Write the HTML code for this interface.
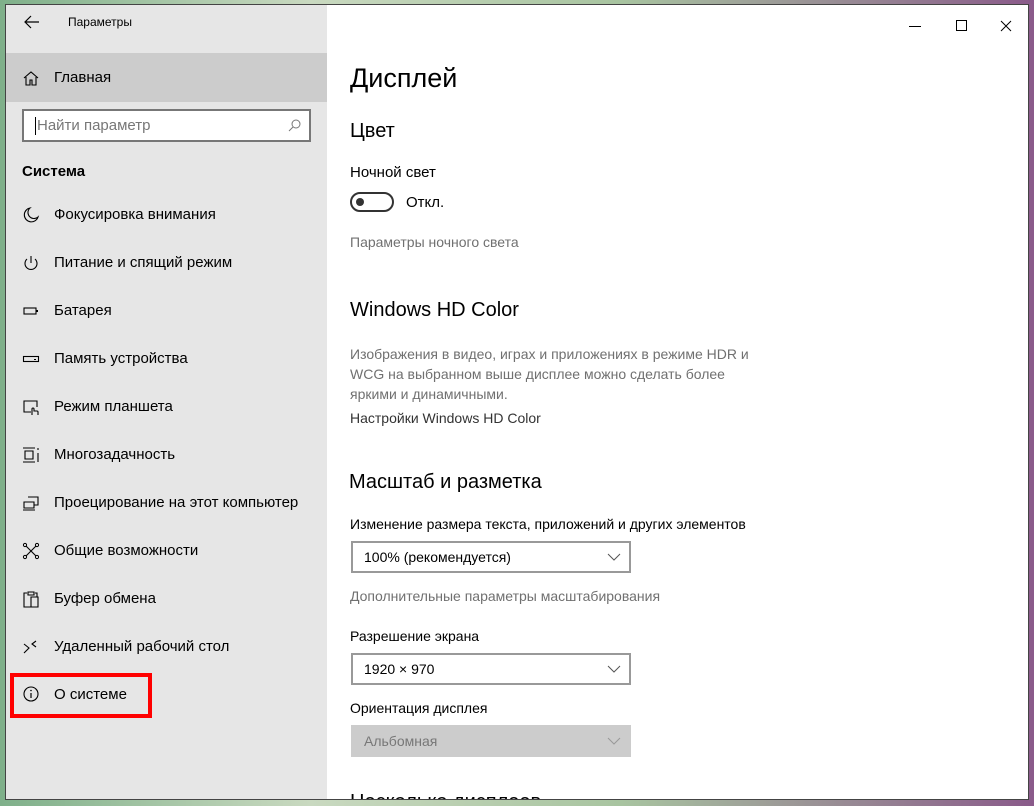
<!DOCTYPE html>
<html><head><meta charset="utf-8"><style>
*{margin:0;padding:0;box-sizing:border-box}
body{width:1034px;height:806px;overflow:hidden;background:linear-gradient(90deg,#7fb08a,#c9d9c0 30%,#a8c4a0 60%,#8a5a8a);font-family:"Liberation Sans",sans-serif;position:relative;color:#000}
.win{position:absolute;left:5px;top:4px;width:1024px;height:796px;border:1px solid #444;background:#fff;overflow:hidden}
.side{position:absolute;left:0;top:0;width:321px;height:100%;background:#e6e6e6}
.t{position:absolute;font-size:15px;white-space:nowrap}
.ic{position:absolute;left:16px;width:18px;height:18px}
.gray{color:#707070}
.sel{position:absolute;left:345px;width:280px;height:32px;border:2px solid #999;background:#fff}
.chev{position:absolute;right:8px;top:6px}
</style></head><body>
<div class="win">
<div class="side">
 <svg style="position:absolute;left:18px;top:10px" width="16" height="14" viewBox="0 0 16 14"><path d="M15 7H2M7 1L1 7l6 6" fill="none" stroke="#000" stroke-width="1.2"/></svg>
 <div class="t" style="left:62px;top:10px;font-size:12px">Параметры</div>
 <div style="position:absolute;left:0;top:48px;width:321px;height:49px;background:#cccccc"></div>
 <svg class="ic" style="top:64px" viewBox="0 0 18 18"><path d="M2 9L9 3l7 6M4 8v8h4v-5h2v5h4V8" fill="none" stroke="#000" stroke-width="1.1"/></svg>
 <div class="t" style="left:48px;top:64px">Главная</div>
 <div style="position:absolute;left:16px;top:104px;width:289px;height:33px;border:2px solid #777;background:#fff">
  <div style="position:absolute;left:11px;top:6px;width:1px;height:18px;background:#000"></div>
  <div class="t gray" style="left:13px;top:6px;font-size:15px;color:#777">Найти параметр</div>
  <svg style="position:absolute;right:8px;top:8px" width="13" height="13" viewBox="0 0 13 13"><circle cx="8" cy="5" r="4" fill="none" stroke="#777"/><path d="M5 8L1 12" stroke="#777"/></svg>
 </div>
 <div class="t" style="left:16px;top:158px;font-weight:bold;font-size:15px">Система</div>

 <svg class="ic" style="top:201px" viewBox="0 0 18 18"><path d="M8 2a7 7 0 1 0 8 9A6 6 0 0 1 8 2z" fill="none" stroke="#000" stroke-width="1.1"/></svg>
 <div class="t" style="left:48px;top:201px">Фокусировка внимания</div>
 <svg class="ic" style="top:249px" viewBox="0 0 18 18"><path d="M5 5a6 6 0 1 0 8 0M9 2v7" fill="none" stroke="#000" stroke-width="1.1"/></svg>
 <div class="t" style="left:48px;top:249px">Питание и спящий режим</div>
 <svg class="ic" style="top:297px" viewBox="0 0 18 18"><rect x="2" y="6" width="12" height="6" fill="none" stroke="#000" stroke-width="1.1"/><rect x="14" y="8" width="2" height="2"/></svg>
 <div class="t" style="left:48px;top:297px">Батарея</div>
 <svg class="ic" style="top:345px" viewBox="0 0 18 18"><rect x="1.5" y="6.5" width="15" height="5" fill="none" stroke="#000" stroke-width="1.1"/><rect x="12" y="9" width="2" height="1"/></svg>
 <div class="t" style="left:48px;top:345px">Память устройства</div>
 <svg class="ic" style="top:393px" viewBox="0 0 18 18"><path d="M9 14H2V3h13v6M10 17v-6a1 1 0 0 1 2 0v2h3a1 1 0 0 1 1 1v3" fill="none" stroke="#000" stroke-width="1.1"/></svg>
 <div class="t" style="left:48px;top:393px">Режим планшета</div>
 <svg class="ic" style="top:441px" viewBox="0 0 18 18"><path d="M1 2h12M1 16h12M3 5h8v8H3zM16 2v2M16 7v9" fill="none" stroke="#000" stroke-width="1.1"/></svg>
 <div class="t" style="left:48px;top:441px">Многозадачность</div>
 <svg class="ic" style="top:489px" viewBox="0 0 18 18"><path d="M6 3h10v8h-4M2 8h10v6H2zM1 16h12" fill="none" stroke="#000" stroke-width="1.1"/></svg>
 <div class="t" style="left:48px;top:489px">Проецирование на этот компьютер</div>
 <svg class="ic" style="top:537px" viewBox="0 0 18 18"><path d="M4 4l10 10M14 4L4 14" stroke="#000" stroke-width="1.1"/><circle cx="3" cy="3" r="1.6" fill="#e6e6e6" stroke="#000"/><circle cx="15" cy="3" r="1.6" fill="#e6e6e6" stroke="#000"/><circle cx="3" cy="15" r="1.6" fill="#e6e6e6" stroke="#000"/><circle cx="15" cy="15" r="1.6" fill="#e6e6e6" stroke="#000"/></svg>
 <div class="t" style="left:48px;top:537px">Общие возможности</div>
 <svg class="ic" style="top:585px" viewBox="0 0 18 18"><path d="M5 3H2v14h7M6 2h6v3H6zM13 3h2v4M9 7h7v10H9z" fill="none" stroke="#000" stroke-width="1.1"/></svg>
 <div class="t" style="left:48px;top:585px">Буфер обмена</div>
 <svg class="ic" style="top:633px" viewBox="0 0 18 18"><path d="M2 6l5 4-5 5M14 3l-4 3 4 3" fill="none" stroke="#000" stroke-width="1.1"/></svg>
 <div class="t" style="left:48px;top:633px">Удаленный рабочий стол</div>
 <svg class="ic" style="top:680px" viewBox="0 0 18 18"><circle cx="9" cy="9" r="7" fill="none" stroke="#000" stroke-width="1.1"/><path d="M9 8v5" stroke="#000" stroke-width="1.2"/><circle cx="9" cy="5.5" r=".8"/></svg>
 <div class="t" style="left:48px;top:681px">О системе</div>
 <div style="position:absolute;left:4px;top:668px;width:142px;height:45px;border:4px solid #f00"></div>
</div>

<svg style="position:absolute;left:903px;top:21px" width="12" height="1"><rect width="12" height="1"/></svg>
<svg style="position:absolute;left:950px;top:15px" width="11" height="11"><rect x=".5" y=".5" width="10" height="10" fill="none" stroke="#000"/></svg>
<svg style="position:absolute;left:994px;top:15px" width="12" height="12"><path d="M1 1l10 10M11 1L1 11" stroke="#000"/></svg>

<div class="t" style="left:344px;top:58px;font-size:27px">Дисплей</div>
<div class="t" style="left:344px;top:115px;font-size:20px">Цвет</div>
<div class="t" style="left:344px;top:159px">Ночной свет</div>
<div style="position:absolute;left:344px;top:187px;width:44px;height:20px;border:2px solid #333;border-radius:10px"><div style="position:absolute;left:4px;top:4px;width:8px;height:8px;border-radius:50%;background:#333"></div></div>
<div class="t" style="left:400px;top:189px">Откл.</div>
<div class="t gray" style="left:344px;top:229px;font-size:14px">Параметры ночного света</div>
<div class="t" style="left:344px;top:294px;font-size:20px">Windows HD Color</div>
<div class="t gray" style="left:344px;top:339px;font-size:14px;line-height:20px;white-space:normal;width:425px">Изображения в видео, играх и приложениях в режиме HDR и WCG на выбранном выше дисплее можно сделать более яркими и динамичными.</div>
<div class="t" style="left:344px;top:405px;font-size:14px;color:#333">Настройки Windows HD Color</div>
<div class="t" style="left:343px;top:466px;font-size:20px">Масштаб и разметка</div>
<div class="t" style="left:344px;top:511px;font-size:14px">Изменение размера текста, приложений и других элементов</div>
<div class="sel" style="top:536px"><div class="t" style="left:11px;top:6px;font-size:14px">100% (рекомендуется)</div><svg class="chev" width="14" height="14" style="top:8px"><path d="M1 3l6 6 6-6" fill="none" stroke="#555"/></svg></div>
<div class="t gray" style="left:344px;top:583px;font-size:14px">Дополнительные параметры масштабирования</div>
<div class="t" style="left:344px;top:623px;font-size:14px">Разрешение экрана</div>
<div class="sel" style="top:648px"><div class="t" style="left:11px;top:6px;font-size:14px">1920 × 970</div><svg class="chev" width="14" height="14" style="top:8px"><path d="M1 3l6 6 6-6" fill="none" stroke="#555"/></svg></div>
<div class="t" style="left:344px;top:695px;font-size:14px">Ориентация дисплея</div>
<div class="sel" style="top:720px;border:none;background:#ccc"><div class="t" style="left:13px;top:8px;font-size:14px;color:#777">Альбомная</div><svg class="chev" width="14" height="14" style="top:10px;right:10px"><path d="M1 3l6 6 6-6" fill="none" stroke="#999"/></svg></div>
<div class="t" style="left:344px;top:786px;font-size:20px">Несколько дисплеев</div>
</div>
</body></html>
